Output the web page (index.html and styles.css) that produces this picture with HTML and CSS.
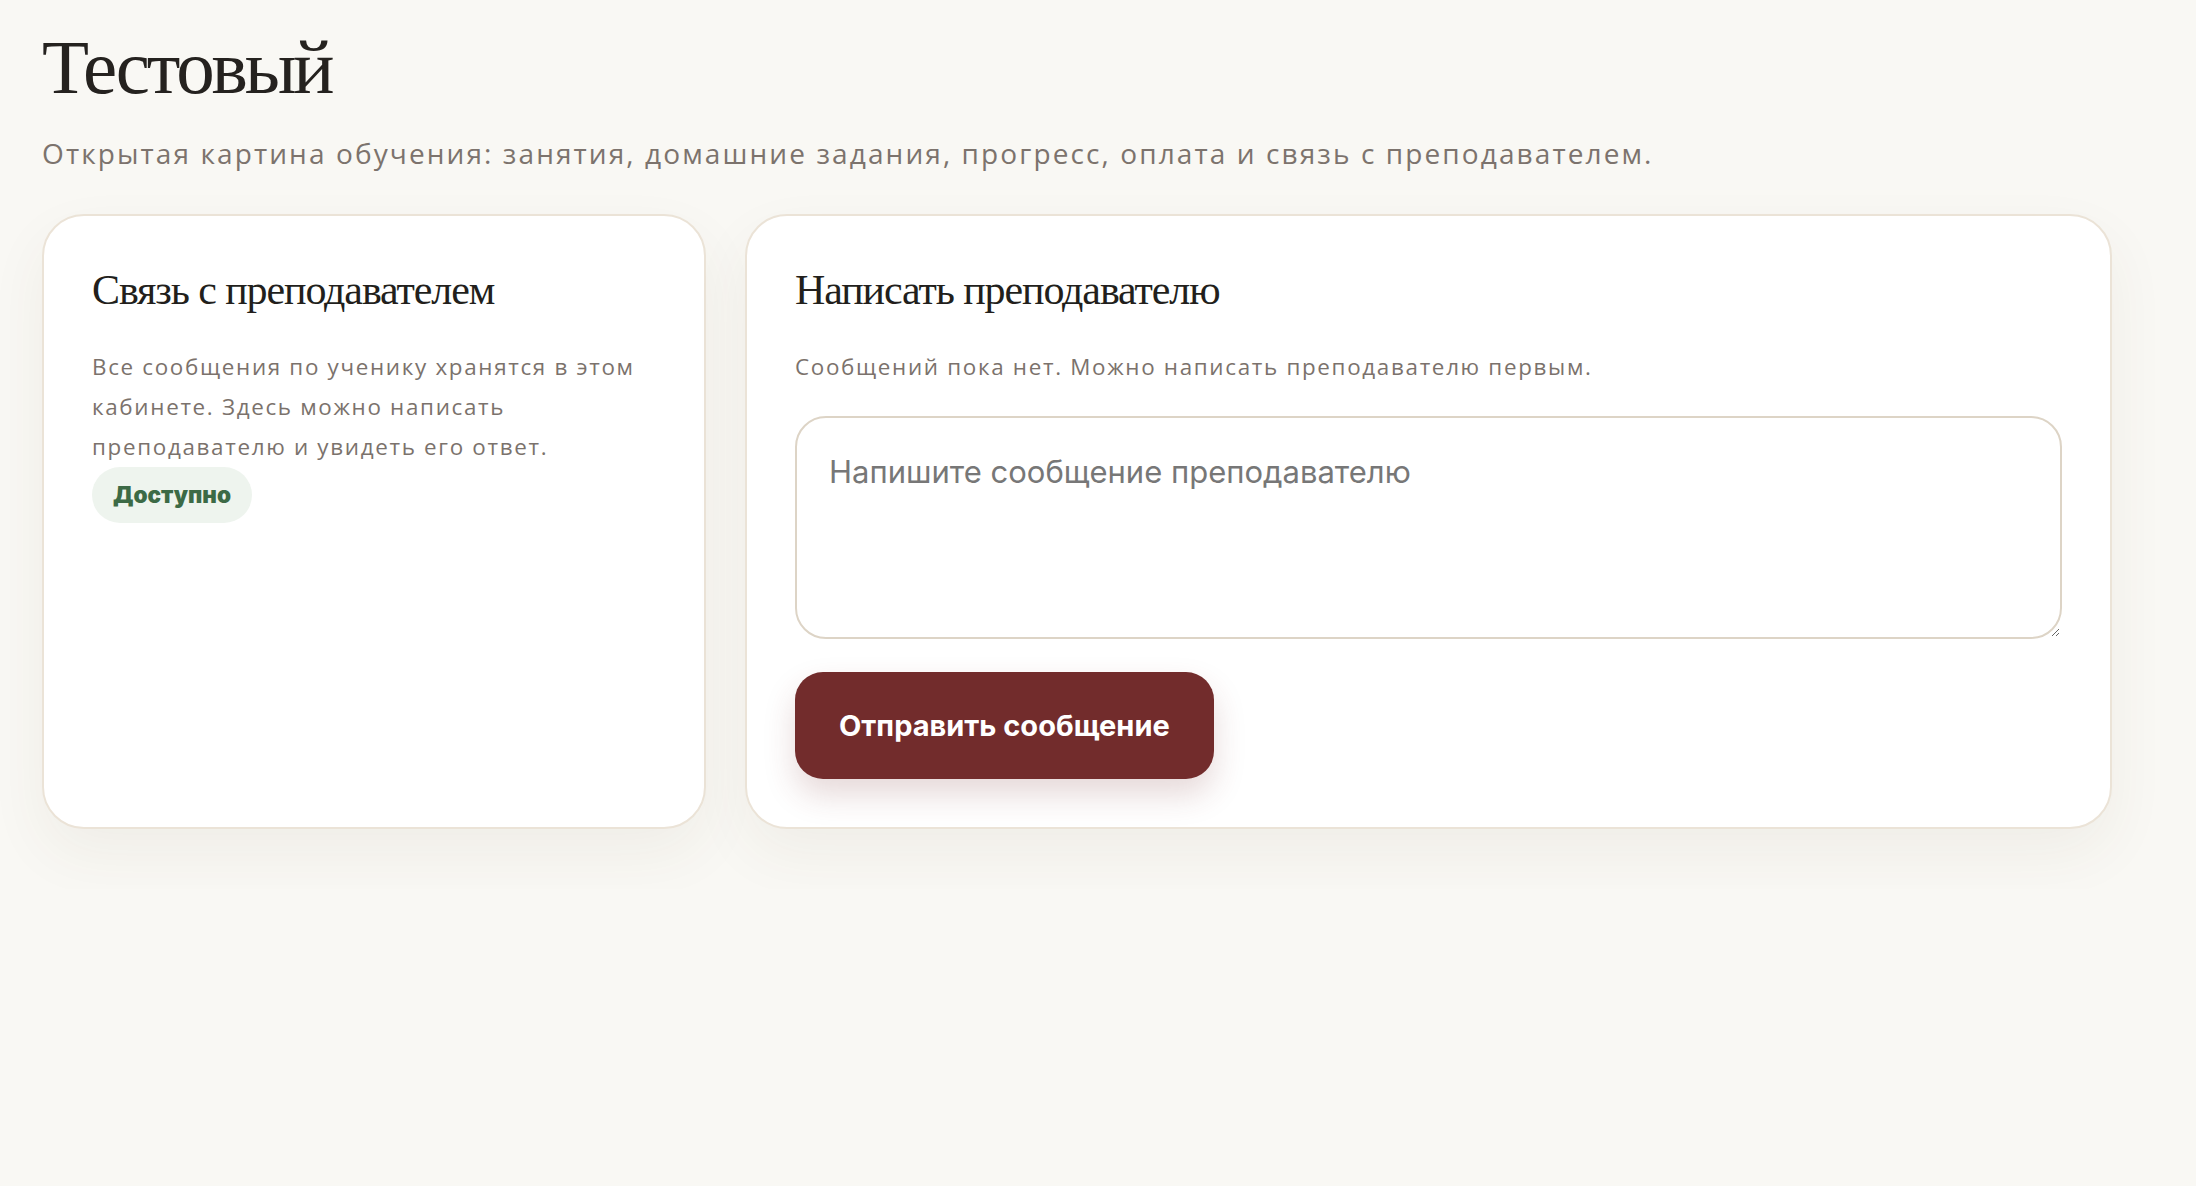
FILE: index.html
```html
<!DOCTYPE html>
<html lang="ru">
<head>
  <meta charset="UTF-8" />
  <meta name="viewport" content="width=device-width, initial-scale=1" />
  <title>Тестовый</title>
  <link rel="stylesheet" href="styles.css">
</head>
<body>
  <main class="page">
    <h1 class="page-title">Тестовый</h1>
    <p class="page-lead">Открытая картина обучения: занятия, домашние задания, прогресс, оплата и связь с преподавателем.</p>

    <div class="chat-grid">
      <section class="card">
        <h2 class="card-title">Связь с преподавателем</h2>
        <p class="card-text">Все сообщения по ученику хранятся в этом кабинете. Здесь можно написать преподавателю и увидеть его ответ.</p>
        <span class="badge">Доступно</span>
      </section>

      <section class="card">
        <h2 class="card-title">Написать преподавателю</h2>
        <p class="card-text">Сообщений пока нет. Можно написать преподавателю первым.</p>
        <form class="message-form" onsubmit="return false">
          <textarea class="message-input" placeholder="Напишите сообщение преподавателю"></textarea>
          <button class="send-btn" type="submit">Отправить сообщение</button>
        </form>
      </section>
    </div>
  </main>
</body>
</html>
```

FILE: styles.css
```css
body {
  margin: 0;
  background: #f9f8f4;
  color: #221f1c;
  font-family: "Open Sans", sans-serif;
}

.page {
  padding: 25px 42px 60px;
}

.page-title {
  margin: 0;
  font-family: "Liberation Serif", serif;
  font-weight: 400;
  font-size: 77px;
  line-height: 1.1;
  letter-spacing: -3.2px;
  color: #25221f;
}

.page-lead {
  margin: 22px 0 0;
  font-size: 28px;
  line-height: 1.5;
  letter-spacing: 0.075em;
  color: #7c736d;
}

.chat-grid {
  display: grid;
  grid-template-columns: 664px 1367px;
  gap: 39px;
  margin-top: 40px;
}

.card {
  background: #fff;
  border: 2px solid #ebe3d7;
  border-radius: 42px;
  padding: 49px 48px 48px;
  box-shadow: 0 24px 60px rgba(80, 60, 30, 0.06);
}

.card-title {
  margin: 0;
  font-family: "Liberation Serif", serif;
  font-weight: 400;
  font-size: 42px;
  line-height: 1.2;
  letter-spacing: -1.1px;
  color: #221f1c;
}

.card-title.wide {
  letter-spacing: -0.9px;
}

.card-text {
  margin: 32px 0 0;
  font-size: 22.4px;
  line-height: 40px;
  letter-spacing: 0.075em;
  color: #7b726c;
}

.badge {
  display: inline-block;
  margin-top: 0;
  padding: 14px 21px;
  border-radius: 28px;
  background: #eef4ee;
  color: #3c6a46;
  font-family: Inter, sans-serif;
  font-weight: 900;
  font-size: 22.5px;
  line-height: 28px;
}

.message-form {
  margin-top: 29px;
}

.message-input {
  display: block;
  box-sizing: border-box;
  width: 100%;
  height: 223px;
  padding: 32px 32px 24px;
  border: 2px solid #ddd4c6;
  border-radius: 31px;
  background: #fff;
  font-family: Inter, sans-serif;
  font-size: 31px;
  line-height: 1.4;
  color: #221f1c;
  outline: none;
}

.message-input::placeholder {
  color: #777;
}

.send-btn {
  display: block;
  margin-top: 33px;
  height: 107px;
  padding: 0 44px;
  border: none;
  border-radius: 28px;
  background: #722c2c;
  color: #fff;
  font-family: Inter, sans-serif;
  font-weight: 700;
  font-size: 29px;
  cursor: pointer;
  box-shadow: 0 16px 32px rgba(114, 44, 44, 0.18);
}
```
